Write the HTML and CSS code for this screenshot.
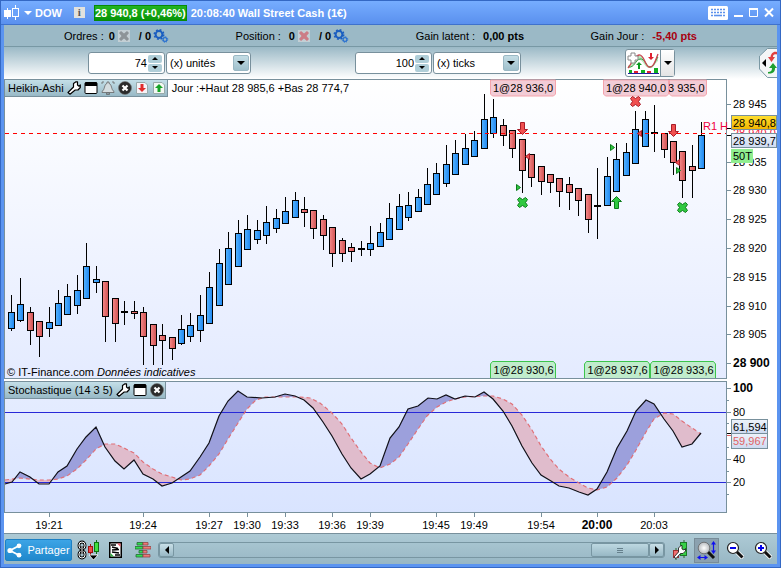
FILE: index.html
```html
<!DOCTYPE html>
<html lang="fr">
<head>
  <meta charset="UTF-8" />
  <meta name="viewport" content="width=device-width, initial-scale=1.0" />
  <title>DOW - Wall Street Cash (1€)</title>
  <link rel="stylesheet" href="styles.css">
</head>
<body>
  <!-- shared icons -->
  <svg class="sprite" aria-hidden="true">
    <defs>
      <linearGradient id="sky" x1="0" y1="0" x2="0" y2="1">
        <stop offset="0" stop-color="#ffffff"/><stop offset="1" stop-color="#e4ebff"/>
      </linearGradient>
      <linearGradient id="sky2" x1="0" y1="0" x2="0" y2="1">
        <stop offset="0" stop-color="#e6edff"/><stop offset="1" stop-color="#d9e4ff"/>
      </linearGradient>
      <linearGradient id="blue" x1="0" x2="1">
        <stop offset="0" stop-color="#55b4ff"/><stop offset="1" stop-color="#1e86f0"/>
      </linearGradient>
      <linearGradient id="red" x1="0" x2="1">
        <stop offset="0" stop-color="#f58a8a"/><stop offset="1" stop-color="#d05050"/>
      </linearGradient>
      <linearGradient id="gold" x1="0" y1="0" x2="0" y2="1">
        <stop offset="0" stop-color="#ffe030"/><stop offset="1" stop-color="#f0b400"/>
      </linearGradient>
      <linearGradient id="silver" x1="0" y1="0" x2="0" y2="1">
        <stop offset="0" stop-color="#eef3fb"/><stop offset="1" stop-color="#cddaf0"/>
      </linearGradient>
      <radialGradient id="glass"><stop offset="0" stop-color="#ffffff"/><stop offset="1" stop-color="#b8bcc0"/></radialGradient>
    </defs>
    <symbol id="wrench" viewBox="0 0 14 14">
      <path d="M1 11.5L6.5 6V2.5L9 .8H10.5V4L12 5.2L13.3 4V6.5L11 9H8.2L3 13.2Z" fill="#fff" stroke="#000" stroke-width="1.2" stroke-linejoin="round"/>
    </symbol>
    <symbol id="pane" viewBox="0 0 14 14">
      <rect x="1" y="1.5" width="12" height="11" rx="1" fill="#fff" stroke="#000"/>
      <path d="M1 1.5H13V5H1Z" fill="#000"/>
    </symbol>
    <symbol id="close" viewBox="0 0 14 14">
      <circle cx="7" cy="7" r="6.5" fill="#2b2b2b" stroke="#777" stroke-width=".6"/>
      <path d="M4.5 4.5L9.5 9.5M9.5 4.5L4.5 9.5" stroke="#fff" stroke-width="2.2"/>
    </symbol>
    <symbol id="gears" viewBox="0 0 16 14">
      <circle cx="6" cy="5.5" r="3.4" fill="none" stroke="#1a5ec0" stroke-width="2"/>
      <circle cx="6" cy="5.5" r="4.7" fill="none" stroke="#1a5ec0" stroke-width="1.6" stroke-dasharray="1.85 1.85"/>
      <circle cx="12" cy="10.5" r="1.9" fill="none" stroke="#2870d0" stroke-width="1.2"/>
      <circle cx="12" cy="10.5" r="2.8" fill="none" stroke="#2870d0" stroke-width="1" stroke-dasharray="1.1 1.1"/>
    </symbol>
    <symbol id="cross" viewBox="0 0 12 12">
      <rect width="12" height="12" fill="#c3cfd4"/>
      <path d="M1 3L3 1L6 3.5L9 1L11 3L8.5 6L11 9L9 11L6 8.5L3 11L1 9L3.5 6Z" fill="currentColor"/>
    </symbol>
    <symbol id="loupe" viewBox="0 0 18 18">
      <path d="M10 10L17 17" stroke="#fff" stroke-width="4.5"/>
      <path d="M10 10L16.5 16.5" stroke="#111" stroke-width="3"/>
      <circle cx="7" cy="7" r="5.5" fill="#fff" stroke="#222" stroke-width="1.2"/>
    </symbol>
  </svg>

  <div class="window">
    <header class="titlebar">
      <svg width="15" height="15" viewBox="0 0 15 15">
        <path d="M3.5 3V14M11.5 0V15" stroke="#fff"/>
        <rect y="5" width="7" height="7" fill="#fff"/>
        <rect x="8.5" y="3.5" width="6" height="8" fill="#6aa2fa" stroke="#fff"/>
      </svg>
      <svg class="caret" width="8" height="4" viewBox="0 0 8 4"><path d="M0 0H8L4 4Z" fill="#fff"/></svg>
      <span>DOW</span>
      <span class="info">i</span>
      <span class="quote">28 940,8 (+0,46%)</span>
      <span class="time">20:08:40</span>
      <span>Wall Street Cash (1€)</span>
      <div class="controls">
        <button aria-label="Clavier"><svg width="20" height="14" viewBox="0 0 20 14">
          <rect width="20" height="14" rx="1.5" fill="#fff"/>
          <path d="M3 3.5H17M3 6.5H17M3 9.5H5M15 9.5H17" stroke="#5c91ec" stroke-width="1.6" stroke-dasharray="2 1"/>
          <path d="M6 9.5H14" stroke="#5c91ec" stroke-width="1.6"/>
        </svg></button>
        <button aria-label="Réduire"><svg width="9" height="14" viewBox="0 0 9 14"><path d="M0 10H9" stroke="#fff" stroke-width="2"/></svg></button>
        <button aria-label="Agrandir"><svg width="9" height="14" viewBox="0 0 9 14"><path d="M.5 3V10.5H8.5V3" fill="none" stroke="#fff"/><path d="M0 3H9" stroke="#fff" stroke-width="2"/></svg></button>
        <button aria-label="Fermer"><svg width="10" height="14" viewBox="0 0 10 14"><path d="M1 2.5L9 10.5M9 2.5L1 10.5" stroke="#fff" stroke-width="2"/></svg></button>
      </div>
    </header>

    <section class="account">
      <div class="stat">
        <span class="label">Ordres :</span><b>0</b>
        <svg class="muted" width="12" height="12"><use href="#cross"/></svg>
        <b class="slash">/ 0</b><svg width="16" height="14"><use href="#gears"/></svg>
      </div>
      <div class="stat">
        <span class="label wide">Position :</span><b>0</b>
        <svg class="danger" width="12" height="12"><use href="#cross"/></svg>
        <b class="slash">/ 0</b><svg width="16" height="14"><use href="#gears"/></svg>
      </div>
      <div class="stat"><span class="label wide">Gain latent :</span><b>0,00 pts</b></div>
      <div class="stat"><span class="label wide">Gain Jour :</span><b class="loss">-5,40 pts</b></div>
    </section>

    <section class="toolbar">
      <div class="period">
        <div class="spin">
          <input type="text" value="74" aria-label="Nombre d'unités">
          <div class="arrows">
            <button aria-label="Plus"><svg width="6" height="3"><path d="M0 3H6L3 0Z"/></svg></button>
            <button aria-label="Moins"><svg width="6" height="3"><path d="M0 0H6L3 3Z"/></svg></button>
          </div>
        </div>
        <div class="drop">
          <select aria-label="Affichage"><option>(x) unités</option></select>
          <span class="drop-arrow"><svg width="8" height="4"><path d="M0 0H8L4 4Z"/></svg></span>
        </div>
      </div>
      <div class="period">
        <div class="spin">
          <input type="text" value="100" aria-label="Nombre de ticks">
          <div class="arrows">
            <button aria-label="Plus"><svg width="6" height="3"><path d="M0 3H6L3 0Z"/></svg></button>
            <button aria-label="Moins"><svg width="6" height="3"><path d="M0 0H6L3 3Z"/></svg></button>
          </div>
        </div>
        <div class="drop drop-ticks">
          <select aria-label="Unité de temps"><option>(x) ticks</option></select>
          <span class="drop-arrow"><svg width="8" height="4"><path d="M0 0H8L4 4Z"/></svg></span>
        </div>
      </div>
      <div class="indicators">
        <button class="add" aria-label="Ajouter un indicateur"><svg width="32" height="23" viewBox="0 0 32 23">
          <path d="M1 13C6 15 8 2 13 3S19 15 24 14S28 4 31 3L31 9C27 12 27 17 22 16S16 7 12 8S6 17 1 16Z" fill="#bce8bc"/>
          <path d="M1 15C8 16 8 8 13 7S19 15 23 15S28 9 31 5" fill="none" stroke="#3aa04a"/>
          <path d="M1 16C5 11 7 4 12 3S18 14 22 15S28 10 31 2" fill="none" stroke="#d04050" stroke-width="1.3"/>
          <path d="M4 1H8V4H11V8H8V11H4V8H1V4H4Z" fill="#fff" stroke="#888"/>
          <path d="M12 10L15 13H13V17H11V13H9Z" fill="#0a9a20"/>
          <path d="M24 8L21 5H23V1H25V5H27Z" fill="#e02030"/>
          <path d="M2 21V18H5V21M14 21V18H18V21M27 21V16H31V21" fill="#10b020"/>
          <path d="M7 21V19H11V21M20 21V19H24V21" fill="#e02030"/>
          <path d="M1 21.5H32" stroke="#2020a0"/>
        </svg></button>
        <button class="more" aria-label="Liste"><svg width="8" height="4"><path d="M0 0H8L4 4Z"/></svg></button>
      </div>
      <button class="side-tab" aria-label="Passage d'ordres"><svg width="18" height="30" viewBox="0 0 18 30">
        <path d="M18 .5H8.500L.5 8V21L8.5 29.5H18" fill="#f4f6f7" stroke="#7a98a4"/>
        <path d="M7 11V19L3 15Z"/>
        <path d="M18 4C14 3 12 6 11.500 9H9L12.500 14L16 9H14C14 7 15 5.500 18 6.500Z" fill="#e04040"/>
        <path d="M9 25.500C15 26 16 23 16 20H18L14 15L10 20H13C13 22.500 12 24 9 24Z" fill="#20a030"/>
      </svg></button>
    </section>

    <section class="pane">
      <svg class="chart" id="priceChart" viewBox="4 79 773 302"></svg>
      <div class="legend">
        <div class="legend-box">
          <span>Heikin-Ashi</span>
          <button aria-label="Réglages"><svg width="14" height="14"><use href="#wrench"/></svg></button>
          <button aria-label="Fenêtre"><svg width="14" height="14"><use href="#pane"/></svg></button>
          <button aria-label="Alerte"><svg width="14" height="14" viewBox="0 0 14 14">
            <path d="M1 10.5C4 9 3 3 6 2.5V1H8V2.5C11 3 10 9 13 10.5V11.5H1Z" fill="#d5dde0" stroke="#666" stroke-width=".8"/>
            <path d="M5.5 12H8.5V13.5H5.5ZM1 1H3M1 1V3M11 1H13V3" fill="none" stroke="#666" stroke-width=".8"/>
          </svg></button>
          <button aria-label="Fermer"><svg width="14" height="14"><use href="#close"/></svg></button>
          <button aria-label="Vendre"><svg width="14" height="14" viewBox="0 0 14 14">
            <path d="M1.5 1.5H10L12.5 4V12.5H1.5Z" fill="#f7f3f8" stroke="#9aa"/>
            <path d="M7 11L3 7H5.5V3H8.5V7H11Z" fill="#e02c2c"/>
          </svg></button>
          <button aria-label="Acheter"><svg width="14" height="14" viewBox="0 0 14 14">
            <path d="M1.5 1.5H10L12.5 4V12.5H1.5Z" fill="#f3f8f3" stroke="#9aa"/>
            <path d="M7 3L3 7H5.5V11H8.5V7H11Z" fill="#18a428"/>
          </svg></button>
        </div>
        <span>Jour :+Haut 28 985,6 +Bas 28 774,7</span>
      </div>
    </section>

    <section class="pane">
      <svg class="chart" id="stochChart" viewBox="4 381 773 132"></svg>
      <div class="legend">
        <div class="legend-box">
          <span>Stochastique (14 3 5)</span>
          <button aria-label="Réglages"><svg width="14" height="14"><use href="#wrench"/></svg></button>
          <button aria-label="Fenêtre"><svg width="14" height="14"><use href="#pane"/></svg></button>
          <button aria-label="Fermer"><svg width="14" height="14"><use href="#close"/></svg></button>
        </div>
      </div>
    </section>

    <svg class="chart" id="timeAxis" viewBox="4 513 773 20"></svg>

    <footer class="bottombar">
      <button class="share"><svg width="15" height="15" viewBox="0 0 15 15">
        <path d="M12.5 2.5L3 7.5L12.5 12.5" fill="none" stroke="#fff" stroke-width="1.8"/>
        <circle cx="12" cy="2.8" r="2.4" fill="#fff"/><circle cx="3" cy="7.5" r="2.6" fill="#fff"/><circle cx="12" cy="12.2" r="2.4" fill="#fff"/>
      </svg>Partager</button>
      <button aria-label="Lier"><svg width="23" height="20" viewBox="0 0 23 20">
        <rect x="2" y="2" width="6" height="7" rx="3" fill="none" stroke="#000" stroke-width="2.8"/>
        <rect x="2" y="11" width="6" height="7" rx="3" fill="none" stroke="#000" stroke-width="2.8"/>
        <rect x="2" y="2" width="6" height="7" rx="3" fill="none" stroke="#fff"/>
        <rect x="2" y="11" width="6" height="7" rx="3" fill="none" stroke="#fff"/>
        <path d="M5 6V14" stroke="#000" stroke-width="3"/><path d="M5 6V14" stroke="#fff"/>
        <path d="M13.5 4V15" stroke="#a01010"/><rect x="11.5" y="6.5" width="4" height="6" fill="#f04848" stroke="#a01010"/>
        <path d="M19.5 0V14" stroke="#107010"/><rect x="17.5" y="2.5" width="4" height="9" fill="#40e040" stroke="#107010"/>
        <path d="M12 15H21L16.5 20Z" fill="#000" stroke="#fff" stroke-width=".8"/>
      </svg></button>
      <button class="orders" aria-label="Ordres"><svg width="13" height="16" viewBox="0 0 13 16">
        <rect x=".75" y=".75" width="11.5" height="14.5" fill="#fff" stroke="#000" stroke-width="1.5"/>
        <path d="M2 3H7M3 5L9 6.5M3 8L10 7.5M3 10L10 11M6 13H11" stroke="#000" stroke-width="1.3"/>
        <path d="M8 1.5H11.5V5Z" fill="#f06070"/><path d="M1.5 11L5 14.5H1.5Z" fill="#30b040"/>
      </svg></button>
      <button class="depth" aria-label="Carnet"><svg width="16" height="16" viewBox="0 0 16 16">
        <path d="M2 .5H8V3H2ZM0 4.500H8V7H0ZM4 8.5H8V11H4ZM1 12.5H8V15H1Z" fill="#30e050" stroke="#286838" stroke-width=".8"/>
        <path d="M8 .5H13V3H8ZM8 4.500H16V7H8ZM8 8.5H12V11H8ZM8 12.5H15V15H8Z" fill="#f07878" stroke="#904848" stroke-width=".8"/>
      </svg></button>
      <div class="scrollbar">
        <button class="scroll-arrow" aria-label="Gauche"><svg width="4" height="8"><path d="M4 0V8L0 4Z"/></svg></button>
        <div class="track"><div class="thumb"><i></i><i></i><i></i></div></div>
        <button class="scroll-arrow" aria-label="Droite"><svg width="4" height="8"><path d="M0 0V8L4 4Z"/></svg></button>
      </div>
      <button aria-label="Réglages du graphique"><svg width="17" height="20" viewBox="0 0 17 20">
        <path d="M12 0V18M4 8V20" stroke="#2a6a2a"/>
        <rect x="8.5" y="2.5" width="6" height="13" fill="#38d048" stroke="#1c7a28"/>
        <rect x="1.5" y="10.5" width="5" height="7" fill="#f07070" stroke="#a03030"/>
        <path d="M2 17L6.5 12V8L9 5.5H10V9L12 10L13.5 8.5V11L11 13.5H8.5L4 18.5Z" fill="#fff" stroke="#222" stroke-width=".9"/>
      </svg></button>
      <button class="zoom-fit" aria-label="Ajuster"><svg width="20" height="20" viewBox="0 0 20 20">
        <path d="M10 11L17 18" stroke="#111" stroke-width="3"/>
        <circle cx="7" cy="8" r="5.8" fill="url(#glass)" stroke="#666" stroke-width=".8"/>
        <path d="M16.5 3V12M2 17.5H9" stroke="#1010f0" stroke-width="1.2"/>
        <path d="M14 4.5L16.5 1L19 4.5ZM14 10.5L16.5 14L19 10.5ZM3.5 15L0 17.5L3.5 20ZM7.5 15L11 17.5L7.5 20Z" fill="#1010f0"/>
      </svg></button>
      <button class="zoom" aria-label="Zoom arrière"><svg width="18" height="18" viewBox="0 0 18 18"><use href="#loupe"/><path d="M4 7H10" stroke="#0000e8" stroke-width="2"/></svg></button>
      <button class="zoom" aria-label="Zoom avant"><svg width="18" height="18" viewBox="0 0 18 18"><use href="#loupe"/><path d="M4 7H10M7 4V10" stroke="#0000e8" stroke-width="2"/></svg></button>
    </footer>
  </div>

  <script src="chart.js"></script>
</body>
</html>
```

FILE: styles.css
```css
* {
  box-sizing: border-box;
}
body {
  margin: 0;
  font-family: "Liberation Sans", Arial, sans-serif;
  font-size: 11px;
  line-height: 14px;
  color: #000;
  background-color: #fff;
}
button {
  display: flex;
  align-items: center;
  justify-content: center;
  padding: 0;
  border: 0;
  background: none;
  font: inherit;
}
svg {
  display: block;
  flex: none;
}
.sprite {
  position: absolute;
  width: 0;
  height: 0;
}
.window {
  display: flex;
  flex-direction: column;
  min-height: 100vh;
  padding: 0 3px 3px;
  border: 1px solid #3468c4;
  border-top: 0;
  background-color: #5b94f0;
}

/* title bar */
.titlebar {
  display: flex;
  align-items: center;
  height: 25px;
  margin: 0 -3px;
  padding: 0 6px 0 3px;
  border-top: 1px solid #3468c4;
  border-bottom: 1px solid #3f72cc;
  background: linear-gradient(#76adff, #5a90ee);
  color: #fff;
  font-weight: bold;
}
.caret {
  margin: 0 3px 0 5px;
}
.info {
  width: 11px;
  height: 11px;
  margin: 0 9px 0 12px;
  background-color: #e2e2de;
  color: #555;
  font-family: "Liberation Serif", serif;
  line-height: 11px;
  text-align: center;
}
.quote {
  border: 1px solid #078a07;
  background: linear-gradient(#22b422, #079407);
}
.time {
  margin: 0 3px 0 4px;
}
.controls {
  display: flex;
  gap: 6px;
  margin-left: auto;
}

/* account line */
.account {
  display: flex;
  align-items: center;
  justify-content: space-between;
  height: 22px;
  padding: 0 80px 0 60px;
  border-bottom: 1px solid #7898a4;
  background-color: #9bb9c6;
}
.stat {
  display: flex;
  align-items: center;
}
.label {
  margin-right: 5px;
}
.wide {
  margin-right: 8px;
}
.stat svg {
  margin-left: 3px;
}
.slash {
  margin-left: 9px;
}
.slash + svg {
  margin-left: 2px;
}
.muted {
  color: #8d9498;
}
.danger {
  color: #cc7c86;
}
.loss {
  color: #a80010;
}

/* toolbar */
.toolbar {
  display: flex;
  align-items: center;
  height: 32px;
  padding-left: 84px;
  background: linear-gradient(#9bb9c6, #fff);
}
.period {
  display: flex;
  gap: 1px;
  margin-right: 104px;
}
.spin, .drop {
  position: relative;
  display: flex;
  align-items: center;
  height: 22px;
  border: 1px solid #78909c;
  border-radius: 3px;
  background-color: #fff;
}
.spin {
  width: 77px;
  padding-right: 2px;
}
.spin input {
  flex: 1;
  min-width: 0;
  padding: 0 1px 0 4px;
  border: 0;
  background: none;
  font: inherit;
  text-align: right;
}
.arrows {
  display: flex;
  flex-direction: column;
  gap: 1px;
}
.arrows button {
  width: 14px;
  height: 8px;
  border-radius: 2px;
  background-color: #b0ced8;
}
.drop {
  width: 85px;
}
.drop-ticks {
  width: 88px;
}
.drop select {
  width: 100%;
  height: 20px;
  padding: 0 18px 0 3px;
  border: 0;
  background: none;
  color: #000;
  font: inherit;
  appearance: none;
}
.drop-arrow {
  position: absolute;
  right: 1px;
  display: flex;
  align-items: center;
  justify-content: center;
  width: 16px;
  height: 16px;
  border: 1px solid #9ab8c4;
  border-radius: 2px;
  background: linear-gradient(#c4dde5, #9fc0cc);
  pointer-events: none;
}
.indicators {
  display: flex;
  height: 28px;
  border: 1px solid #78909c;
  border-radius: 3px;
  background-color: #fff;
}
.add {
  width: 35px;
  border-right: 1px solid #78909c;
}
.more {
  width: 13px;
  background: linear-gradient(#fff, #e4e4e4);
}
.side-tab {
  margin-left: auto;
}

/* chart panes */
.pane {
  position: relative;
}
.chart {
  width: 100%;
  height: auto;
  background-color: #fff;
}
.chart text {
  font-size: 11px;
}
.chart .major {
  font-size: 12px;
  font-weight: bold;
}
.chart .note {
  font-style: italic;
}
.legend {
  position: absolute;
  top: 0;
  left: 0;
  display: flex;
  align-items: center;
  gap: 4px;
}
.legend-box {
  display: flex;
  align-items: center;
  gap: 3px;
  height: 18px;
  padding: 0 1px 0 3px;
  border: 1px solid #78909c;
  background: linear-gradient(#c4dfe8, #98b9c6);
}

/* bottom bar */
.bottombar {
  display: flex;
  flex: 1;
  align-items: center;
  min-height: 30px;
  padding: 2px 5px 0 1px;
  border-top: 1px solid #78909c;
  background: linear-gradient(#adcad5, #98b7c4);
}
.share {
  gap: 5px;
  width: 67px;
  height: 22px;
  margin-right: 5px;
  border: 1px solid #1c80c4;
  border-radius: 2px;
  background: linear-gradient(#3ca4e6, #2088cc);
  color: #fff;
}
.orders {
  margin: 0 13px 0 9px;
}
.depth {
  margin-right: 7px;
}
.scrollbar {
  display: flex;
  flex: 1;
  height: 16px;
  margin-right: 7px;
  border: 1px solid #7896a2;
  border-radius: 3px;
}
.scroll-arrow {
  width: 15px;
  border: 1px solid #7896a2;
  border-radius: 2px;
  background: linear-gradient(#c8dfe7, #98b8c5);
}
.track {
  display: flex;
  flex: 1;
  justify-content: flex-end;
}
.thumb {
  display: flex;
  flex-direction: column;
  gap: 1px;
  align-items: center;
  justify-content: center;
  width: 58px;
  border: 1px solid #7896a2;
  border-radius: 2px;
  background: linear-gradient(#bdd8e1, #98b8c5);
}
.thumb i {
  width: 6px;
  height: 1px;
  background-color: #66808c;
}
.zoom-fit {
  width: 25px;
  height: 25px;
  margin-left: 5px;
  border: 1px solid #788c98;
  background-color: #8ba1af;
}
.zoom {
  margin-left: 7px;
}
.zoom + .zoom {
  margin-left: 10px;
}
```

FILE: chart.js
```js
// x, high, body top, body bottom, low, type (b = up, r = down, d = doji)
const candles = [
  [11,295,312,329,331,'b'], [20,278,304,321,322,'b'], [30,307,312,331,345,'r'], [39,321,321,337,357,'r'],
  [49,307,322,329,337,'b'], [58,290,303,326,326,'b'], [67,284,296,315,315,'b'], [77,275,290,306,314,'b'],
  [86,243,266,299,299,'b'], [96,266,279,283,293,'b'], [105,281,281,317,342,'r'], [115,298,298,324,342,'r'],
  [124,301,311,313,325,'d'], [134,301,311,314,319,'r'], [143,307,312,337,365,'r'], [153,324,324,346,365,'r'],
  [162,324,335,341,365,'r'], [172,337,337,349,360,'r'], [181,315,329,344,345,'b'], [190,313,325,337,342,'b'],
  [200,295,315,331,342,'b'], [209,272,287,324,324,'b'], [219,249,263,306,306,'b'], [228,232,248,285,285,'b'],
  [238,220,233,267,267,'b'], [247,215,229,250,250,'b'], [257,220,230,240,244,'b'], [266,206,222,236,244,'b'],
  [276,209,218,229,233,'b'], [285,197,211,224,224,'b'], [295,192,200,218,218,'b'], [304,197,209,213,227,'r'],
  [313,210,210,229,239,'r'], [323,215,219,236,250,'r'], [332,227,227,254,267,'r'], [342,238,240,254,262,'r'],
  [351,243,247,252,262,'r'], [361,241,248,250,256,'d'], [370,226,243,250,256,'b'], [380,223,232,247,247,'b'],
  [389,203,218,240,240,'b'], [399,194,206,230,230,'b'], [408,192,205,218,221,'b'], [418,189,197,212,212,'b'],
  [427,168,184,205,205,'b'], [436,163,173,195,195,'b'], [446,145,164,184,187,'b'], [455,140,153,175,175,'b'],
  [465,134,148,165,165,'b'], [474,131,140,157,157,'b'], [484,94,119,149,149,'b'], [493,99,117,134,138,'b'],
  [503,119,125,136,146,'r'], [512,130,130,149,158,'r'], [522,139,139,171,193,'r'], [531,154,154,178,187,'r'],
  [541,166,166,182,195,'r'], [550,174,174,183,193,'r'], [559,178,178,192,207,'r'], [569,177,184,193,210,'r'],
  [578,188,188,201,216,'r'], [588,194,194,220,233,'r'], [597,168,205,207,239,'d'], [607,157,176,206,206,'b'],
  [616,143,159,192,192,'b'], [626,143,152,176,176,'b'], [635,111,129,164,164,'b'], [645,111,119,147,147,'b'],
  [654,105,132,134,152,'d'], [664,133,133,150,158,'r'], [673,141,141,163,175,'r'], [682,151,151,181,198,'r'],
  [692,145,166,171,198,'r'], [701,122,135,169,169,'b']
];

const lineK = [
  [5,484],[12,482],[20,472],[30,477],[39,484],[49,484],[58,472],[67,466],[77,449],[86,437],[96,427],[105,447],
  [115,461],[124,469],[134,460],[143,474],[153,479],[162,486],[172,483],[181,477],[190,471],[200,457],[209,443],
  [219,416],[228,401],[238,391],[247,397],[262,398],[275,397],[285,394],[295,396],[304,400],[313,408],[323,422],
  [332,436],[342,454],[351,468],[361,479],[370,474],[380,466],[390,438],[399,427],[408,409],[418,406],[428,398],
  [437,399],[446,395],[455,399],[465,396],[475,397],[484,392],[493,399],[503,411],[512,426],[522,446],[532,463],
  [541,475],[551,481],[559,486],[569,488],[579,492],[588,495],[597,489],[607,472],[617,448],[627,431],[636,411],
  [646,400],[654,404],[664,419],[673,431],[682,447],[692,444],[701,433]
];
const lineD = [
  [5,480],[20,478],[39,480],[49,480],[58,479],[67,476],[77,469],[86,460],[96,449],[105,444],[115,444],[124,448],
  [134,453],[143,462],[153,469],[162,474],[172,477],[181,480],[190,479],[200,475],[209,466],[219,454],[228,439],
  [238,423],[247,409],[256,400],[265,397],[285,397],[300,397],[310,398],[320,403],[332,413],[342,424],[351,438],
  [361,452],[370,463],[380,468],[390,464],[399,457],[408,444],[418,429],[427,416],[437,407],[446,402],[455,399],
  [465,397],[484,396],[493,396],[503,399],[512,404],[522,415],[532,430],[541,446],[551,460],[559,469],[569,477],
  [579,483],[588,488],[597,490],[607,487],[617,478],[627,465],[636,450],[646,432],[654,419],[664,413],[673,414],
  [682,421],[692,428],[701,434]
];

function rect(x, y, w, h, attrs) {
  return `<rect x="${x}" y="${y}" width="${w}" height="${h}" ${attrs}/>`;
}

function text(x, y, str, attrs = '') {
  return `<text x="${x}" y="${y}" ${attrs}>${str}</text>`;
}

function frame(y, h, fill) {
  return rect(4.5, y + 0.5, 722, h - 1, `fill="${fill}" stroke="#78909c"`);
}

function drawCandle([x, high, top, bottom, low, type]) {
  const wick = rect(x, high, 1, low - high, 'fill="#000"');
  if (type === 'd') {
    return wick + rect(x - 3, top, 7, bottom - top, 'fill="#000"');
  }
  const fill = type === 'b' ? 'url(#blue)' : 'url(#red)';
  return wick + rect(x - 2.5, top + 0.5, 6, bottom - top - 1, `fill="${fill}" stroke="#000"`);
}

function shape(x, y, d, color) {
  const fill = color === 'r' ? '#f05050' : '#30c840';
  const stroke = color === 'r' ? '#a81c28' : '#0c7c1c';
  return `<path transform="translate(${x} ${y})" d="${d}" fill="${fill}" stroke="${stroke}"/>`;
}

const CROSS = 'M-5 -3L-3 -5L0 -3L3 -5L5 -3L3 0L5 3L3 5L0 3L-3 5L-5 3L-3 0Z';
const DOWN = 'M-2 -6H2V1H5L0 6L-5 1H-2Z';
const UP = 'M-2 6H2V-1H5L0 -6L-5 -1H-2Z';
const LEFT = 'M2 -3V3L-2 0Z';
const RIGHT = 'M-2 -3V3L2 0Z';

function topTag(x, w, label, textX) {
  return `<path d="M${x} 80H${x + w}V94L${x + w - 2} 96H${x + 2}L${x} 94Z" fill="#f2ccd6" stroke="#f4a4ac"/>` +
    text(textX, 92, label);
}

function bottomTag(x, label) {
  return `<path d="M${x} 378V364L${x + 2} 361.5H${x + 63}L${x + 65} 364V378" fill="#c0eccc" stroke="#3cc44c"/>` +
    text(x + 3, 374, label);
}

function drawPrice() {
  let out = frame(79, 300, 'url(#sky)');
  out += candles.map(drawCandle).join('');
  out += '<path d="M5 133.5H726" stroke="#f00" stroke-dasharray="4 4"/>';
  out += topTag(669.5, 37, '3 935,0', 668);
  out += topTag(603.5, 65, '1@28 940,0', 606);
  out += topTag(490.5, 65, '1@28 936,0', 493);
  out += bottomTag(490.5, '1@28 930,6') + bottomTag(584.5, '1@28 937,6') + bottomTag(650.5, '1@28 933,6');

  out += shape(635.5, 101.5, CROSS, 'r') + shape(522.5, 202.5, CROSS, 'g') + shape(682.5, 207.5, CROSS, 'g');
  out += shape(522.5, 128.5, DOWN, 'r') + shape(673.5, 130.5, DOWN, 'r') + shape(616.5, 202.5, UP, 'g');
  out += shape(527.5, 156.5, LEFT, 'r') + shape(639.5, 133.5, LEFT, 'r') + shape(677.5, 162.5, LEFT, 'r');
  out += shape(518.5, 187.5, RIGHT, 'g') + shape(612.5, 147.5, RIGHT, 'g') + shape(678.5, 170.5, RIGHT, 'g');

  out += text(703, 130, 'R1 H', 'fill="#f0003c"');
  out += text(7, 376, '© IT-Finance.com') + text(97, 376, 'Données indicatives', 'class="note"');

  // price scale
  const levels = { 945: 104, 935: 162, 930: 190, 925: 219, 920: 248, 915: 277, 910: 306, 905: 334 };
  for (const level in levels) {
    const y = levels[level];
    out += rect(727, y, 4, 1, 'fill="#78909c"') + text(733, y + 4, '28 ' + level);
  }
  out += rect(727, 363, 4, 1, 'fill="#78909c"') + text(733, 367, '28 900', 'class="major"');
  out += rect(727, 128, 4, 1, 'fill="#000"') + rect(727, 135, 4, 1, 'fill="#000"');

  // pivot price, mostly under the two price boxes
  out += text(733, 137, '28 940,0', 'fill="#f02040"');
  out += rect(731.5, 115.5, 45, 14, 'fill="url(#gold)" stroke="#78909c"') + text(733, 127, '28 940,8');
  out += rect(731.5, 133.5, 45, 14, 'fill="url(#silver)" stroke="#78909c"') + text(733, 145, '28 939,7');
  out += rect(731, 149, 22, 14, 'fill="#90ee90"') + text(733, 160, '50T');
  document.getElementById('priceChart').innerHTML = out;
}

function valueAt(line, x) {
  const i = Math.max(1, line.findIndex(p => p[0] >= x));
  const [x0, y0] = line[i - 1];
  const [x1, y1] = line[i];
  return y0 + (y1 - y0) * (x - x0) / (x1 - x0);
}

function area(top, bottom, fill) {
  const points = top.concat(bottom.reverse()).map(p => p.join(',')).join(' ');
  return `<polygon points="${points}" fill="${fill}"/>`;
}

function drawStochastic() {
  const upTop = [], upBottom = [], downTop = [], downBottom = [];
  for (let x = 5; x <= 701; x++) {
    const k = valueAt(lineK, x);
    const d = valueAt(lineD, x);
    upTop.push([x, Math.min(k, d)]);
    upBottom.push([x, d]);
    downTop.push([x, d]);
    downBottom.push([x, Math.max(k, d)]);
  }
  let out = frame(381, 132, 'url(#sky2)');
  out += area(upTop, upBottom, '#9ca0dc') + area(downTop, downBottom, '#e0bccc');
  out += rect(5, 412, 721, 1, 'fill="#2828d8"') + rect(5, 482, 721, 1, 'fill="#2828d8"');
  out += `<polyline points="${lineD.join(' ')}" fill="none" stroke="#e07078" stroke-width="1.2" stroke-dasharray="4 3"/>`;
  out += `<polyline points="${lineK.join(' ')}" fill="none" stroke="#101018" stroke-width="1.2"/>`;

  [[388, 100], [412, 80], [459, 40], [482, 20]].forEach(([y, label]) => {
    out += rect(727, y, 4, 1, 'fill="#78909c"');
    out += text(733, y + 4, label, label === 100 ? 'class="major"' : '');
  });
  [400, 423, 447, 471, 494].forEach(y => {
    out += rect(727, y, 2, 1, 'fill="#78909c"');
  });
  out += rect(727, 433, 4, 1, 'fill="#000"') + rect(727, 435, 4, 1, 'fill="#e06060"');
  out += rect(731.5, 419.5, 36, 14, 'fill="url(#silver)" stroke="#78909c"') + text(733, 431, '61,594');
  out += rect(731.5, 433.5, 36, 15, 'fill="url(#silver)" stroke="#78909c"') + text(733, 445, '59,967', 'fill="#e06464"');
  document.getElementById('stochChart').innerHTML = out;
}

function drawTimeAxis() {
  const times = [
    [49, '19:21'], [143, '19:24'], [209, '19:27'], [247, '19:30'], [285, '19:33'], [332, '19:36'],
    [370, '19:39'], [436, '19:45'], [474, '19:49'], [541, '19:54'], [597, '20:00'], [654, '20:03']
  ];
  document.getElementById('timeAxis').innerHTML = times.map(([x, label]) =>
    rect(x, 513, 1, 4, 'fill="#78909c"') +
    text(x, 529, label, `text-anchor="middle" ${label === '20:00' ? 'class="major"' : ''}`)
  ).join('');
}

drawPrice();
drawStochastic();
drawTimeAxis();
```
